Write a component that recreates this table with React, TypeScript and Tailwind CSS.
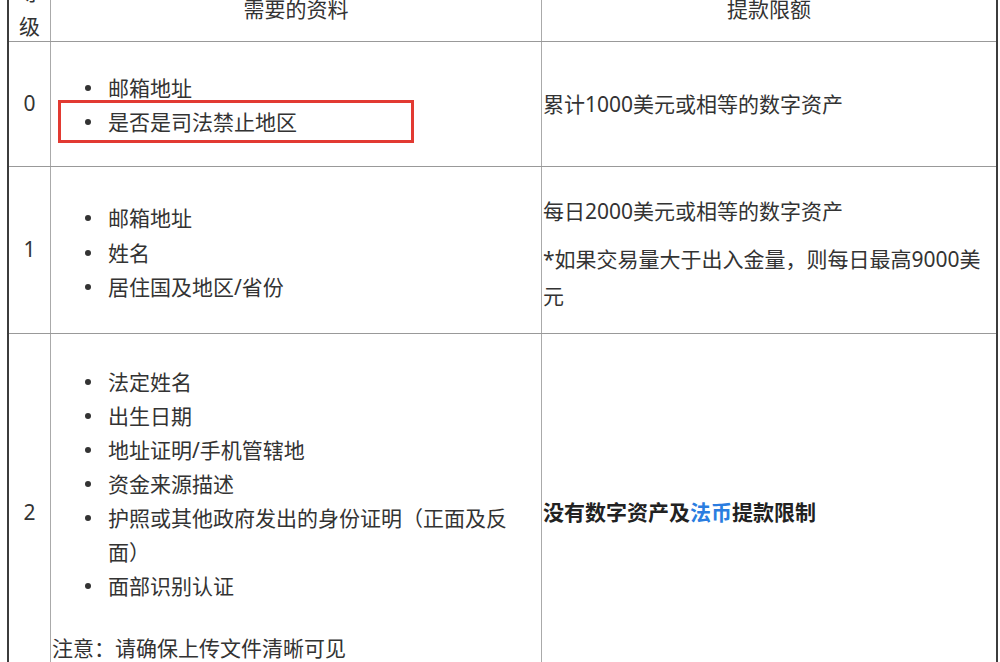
import React from "react";

function Item({ children }: { children: React.ReactNode }) {
  return (
    <li className="flex items-start">
      <span className="mt-[14px] ml-[34px] mr-[17px] w-[6px] h-[6px] shrink-0 rounded-full bg-[#333]" />
      <span className="min-w-0">{children}</span>
    </li>
  );
}

export default function App() {
  return (
    <div className="w-[1000px] h-[662px] overflow-hidden bg-white font-[family-name:'Noto_Sans','Noto_Sans_CJK_SC',sans-serif] text-[21px] text-[#333] [text-spacing-trim:space-all]">
      <div className="ml-[7px] w-[991px] -mt-[27px] border-x-2 border-[#3c3c3c]">
        {/* header */}
        <div className="flex h-[69px] pt-[4px] border-b border-[#999]">
          <div className="w-[42px] shrink-0 border-r border-[#aaa] flex flex-col items-center justify-center leading-[34px]">
            <span>等</span>
            <span>级</span>
          </div>
          <div className="w-[491px] shrink-0 border-r border-[#aaa] flex items-center justify-center leading-[34px]">
            需要的资料
          </div>
          <div className="flex-1 flex items-center justify-center leading-[34px]">提款限额</div>
        </div>

        {/* row 0 */}
        <div className="flex h-[125px] border-b border-[#999]">
          <div className="w-[42px] shrink-0 border-r border-[#aaa] flex items-center justify-center">0</div>
          <div className="relative w-[491px] shrink-0 border-r border-[#aaa] flex flex-col justify-center pt-[1px]">
            <ul className="leading-[34px]">
              <Item>邮箱地址</Item>
              <Item>是否是司法禁止地区</Item>
            </ul>
            <div className="absolute left-[7px] top-[58px] w-[356px] h-[43px] border-[3px] border-[#e23a32]" />
          </div>
          <div className="flex-1 flex items-center pl-[1px] leading-[36px]">累计1000美元或相等的数字资产</div>
        </div>

        {/* row 1 */}
        <div className="flex h-[167px] border-b border-[#999]">
          <div className="w-[42px] shrink-0 border-r border-[#aaa] flex items-center justify-center">1</div>
          <div className="w-[491px] shrink-0 border-r border-[#aaa] flex flex-col justify-center pt-[6px]">
            <ul className="leading-[34.5px]">
              <Item>邮箱地址</Item>
              <Item>姓名</Item>
              <Item>居住国及地区/省份</Item>
            </ul>
          </div>
          <div className="flex-1 flex flex-col justify-center pl-[1px] pt-[8px] leading-[37px]">
            <p className="mb-[11px]">每日2000美元或相等的数字资产</p>
            <p>*如果交易量大于出入金量，则每日最高9000美元</p>
          </div>
        </div>

        {/* row 2 */}
        <div className="flex h-[358px] border-b border-[#999]">
          <div className="w-[42px] shrink-0 border-r border-[#aaa] flex items-center justify-center">2</div>
          <div className="w-[491px] shrink-0 border-r border-[#aaa] flex flex-col justify-center pt-[4px]">
            <ul className="leading-[34px] mb-[28px]">
              <Item>法定姓名</Item>
              <Item>出生日期</Item>
              <Item>地址证明/手机管辖地</Item>
              <Item>资金来源描述</Item>
              <Item>护照或其他政府发出的身份证明（正面及反面）</Item>
              <Item>面部识别认证</Item>
            </ul>
            <p className="pl-[1px] leading-[34px]">注意：请确保上传文件清晰可见</p>
          </div>
          <div className="flex-1 flex items-center pl-[1px] font-bold text-[#222]">
            <span>
              没有数字资产及<span className="text-[#2b7de0]">法币</span>提款限制
            </span>
          </div>
        </div>
      </div>
    </div>
  );
}
